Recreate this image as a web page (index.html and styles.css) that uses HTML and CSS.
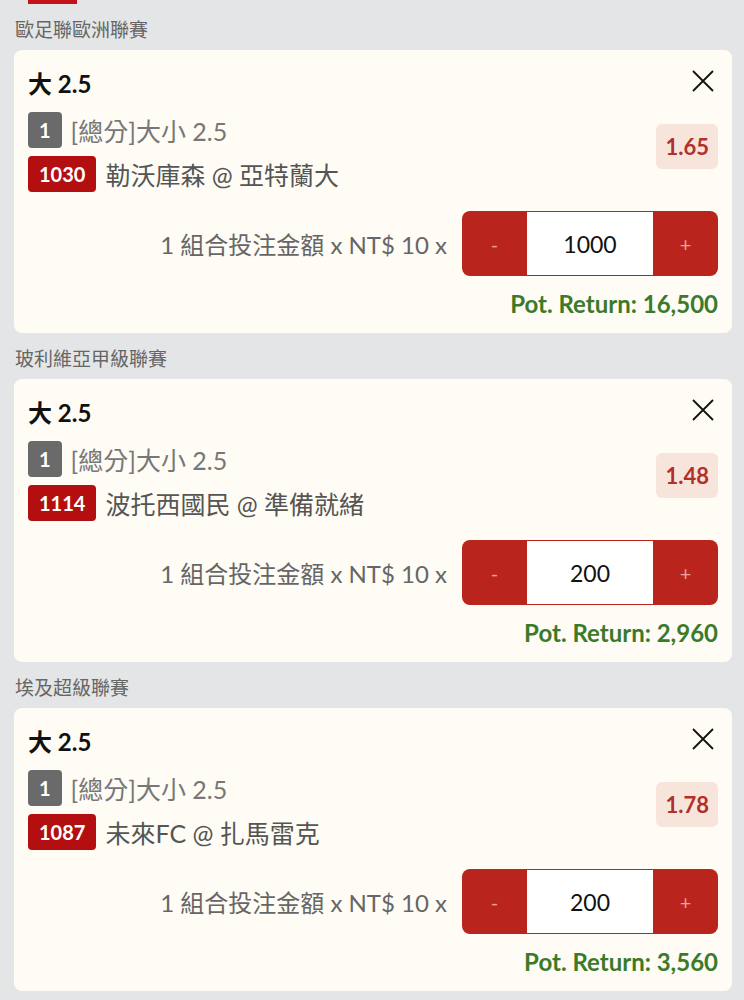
FILE: index.html
```html
<!DOCTYPE html>
<html lang="zh-Hant">
<head>
    <meta charset="UTF-8">
    <meta name="viewport" content="width=device-width, initial-scale=1.0">
    <title>投注單</title>
    <link rel="stylesheet" href="styles.css">
</head>
<body>
    <div class="top-tab"></div>

    <div class="league">歐足聯歐洲聯賽</div>
    <div class="bet-card">
        <div class="bet-head">
            <span class="bet-title">大 2.5</span>
            <button class="close-btn" aria-label="close">
                <svg width="22" height="22" viewBox="0 0 22 22"><path d="M1 1 L21 21 M21 1 L1 21" stroke="#111" stroke-width="1.8" fill="none"/></svg>
            </button>
        </div>
        <div class="selection">
            <div class="sel-lines">
                <div class="sel-row market"><span class="badge grey">1</span>[總分]大小 2.5</div>
                <div class="sel-row teams"><span class="badge red">1030</span>勒沃庫森 @ 亞特蘭大</div>
            </div>
            <div class="odds">1.65</div>
        </div>
        <div class="stake-row">
            <span class="stake-label">1 組合投注金額 x NT$ 10 x</span>
            <div class="stepper">
                <span class="step-btn">-</span>
                <span class="step-value">1000</span>
                <span class="step-btn">+</span>
            </div>
        </div>
        <div class="pot-return">Pot. Return: 16,500</div>
    </div>

    <div class="league">玻利維亞甲級聯賽</div>
    <div class="bet-card">
        <div class="bet-head">
            <span class="bet-title">大 2.5</span>
            <button class="close-btn" aria-label="close">
                <svg width="22" height="22" viewBox="0 0 22 22"><path d="M1 1 L21 21 M21 1 L1 21" stroke="#111" stroke-width="1.8" fill="none"/></svg>
            </button>
        </div>
        <div class="selection">
            <div class="sel-lines">
                <div class="sel-row market"><span class="badge grey">1</span>[總分]大小 2.5</div>
                <div class="sel-row teams"><span class="badge red">1114</span>波托西國民 @ 準備就緒</div>
            </div>
            <div class="odds">1.48</div>
        </div>
        <div class="stake-row">
            <span class="stake-label">1 組合投注金額 x NT$ 10 x</span>
            <div class="stepper">
                <span class="step-btn">-</span>
                <span class="step-value">200</span>
                <span class="step-btn">+</span>
            </div>
        </div>
        <div class="pot-return">Pot. Return: 2,960</div>
    </div>

    <div class="league">埃及超級聯賽</div>
    <div class="bet-card">
        <div class="bet-head">
            <span class="bet-title">大 2.5</span>
            <button class="close-btn" aria-label="close">
                <svg width="22" height="22" viewBox="0 0 22 22"><path d="M1 1 L21 21 M21 1 L1 21" stroke="#111" stroke-width="1.8" fill="none"/></svg>
            </button>
        </div>
        <div class="selection">
            <div class="sel-lines">
                <div class="sel-row market"><span class="badge grey">1</span>[總分]大小 2.5</div>
                <div class="sel-row teams"><span class="badge red">1087</span>未來FC @ 扎馬雷克</div>
            </div>
            <div class="odds">1.78</div>
        </div>
        <div class="stake-row">
            <span class="stake-label">1 組合投注金額 x NT$ 10 x</span>
            <div class="stepper">
                <span class="step-btn">-</span>
                <span class="step-value">200</span>
                <span class="step-btn">+</span>
            </div>
        </div>
        <div class="pot-return">Pot. Return: 3,560</div>
    </div>
</body>
</html>
```

FILE: styles.css
```css
body {
    margin: 0;
    background: #e4e5e7;
    font-family: Lato, "Noto Sans CJK TC", sans-serif;
    color: #222;
}

.top-tab {
    width: 49px;
    height: 4px;
    margin-left: 28px;
    background: #c4121a;
}

.league {
    padding: 12px 15px 6px;
    line-height: 28px;
    font-size: 19px;
    color: #666;
}

.bet-card {
    margin: 0 12px 0 14px;
    padding: 14px 14px 13px;
    background: #fefcf4;
    border-radius: 8px;
}

.bet-head {
    display: flex;
    justify-content: space-between;
    align-items: center;
    height: 36px;
}

.bet-title {
    font-size: 24px;
    font-weight: bold;
    color: #111;
}

.close-btn {
    display: flex;
    align-items: center;
    justify-content: center;
    width: 30px;
    height: 30px;
    margin-top: -2px;
    padding: 0;
    border: none;
    background: none;
}

/* selection lines + odds */
.selection {
    display: flex;
    align-items: center;
    justify-content: space-between;
    margin-top: 8px;
}

.sel-row {
    display: flex;
    align-items: center;
    height: 44px;
    font-size: 25px;
}

.market {
    color: #777;
}

.teams {
    color: #555;
}

.badge {
    display: inline-flex;
    align-items: center;
    justify-content: center;
    height: 36px;
    min-width: 33px;
    padding: 0 11px;
    margin-right: 9px;
    box-sizing: border-box;
    border-radius: 4px;
    color: #fff;
    font-size: 20px;
    font-weight: bold;
}

.badge.grey {
    background: #6a6a6a;
}

.badge.red {
    background: #b30f10;
}

.odds {
    margin-bottom: 12px;
    padding: 0 9px;
    height: 45px;
    line-height: 45px;
    border-radius: 6px;
    background: #f7e5dc;
    color: #b2302a;
    font-size: 22px;
    font-weight: bold;
}

/* stake input */
.stake-row {
    display: flex;
    justify-content: flex-end;
    align-items: center;
    margin-top: 15px;
}

.stake-label {
    margin-right: 15px;
    font-size: 24px;
    color: #666;
}

.stepper {
    display: flex;
    width: 256px;
    height: 65px;
    border-radius: 8px;
    overflow: hidden;
    background: #b9241d;
}

.step-btn {
    display: flex;
    align-items: center;
    justify-content: center;
    width: 65px;
    color: #eaa39c;
    font-size: 20px;
}

.step-value {
    display: flex;
    align-items: center;
    justify-content: center;
    flex: 1;
    margin: 1px 0;
    background: #fff;
    color: #111;
    font-size: 23px;
}

.pot-return {
    margin-top: 12px;
    line-height: 32px;
    text-align: right;
    font-size: 24px;
    font-weight: bold;
    color: #3b7a2b;
}
```
